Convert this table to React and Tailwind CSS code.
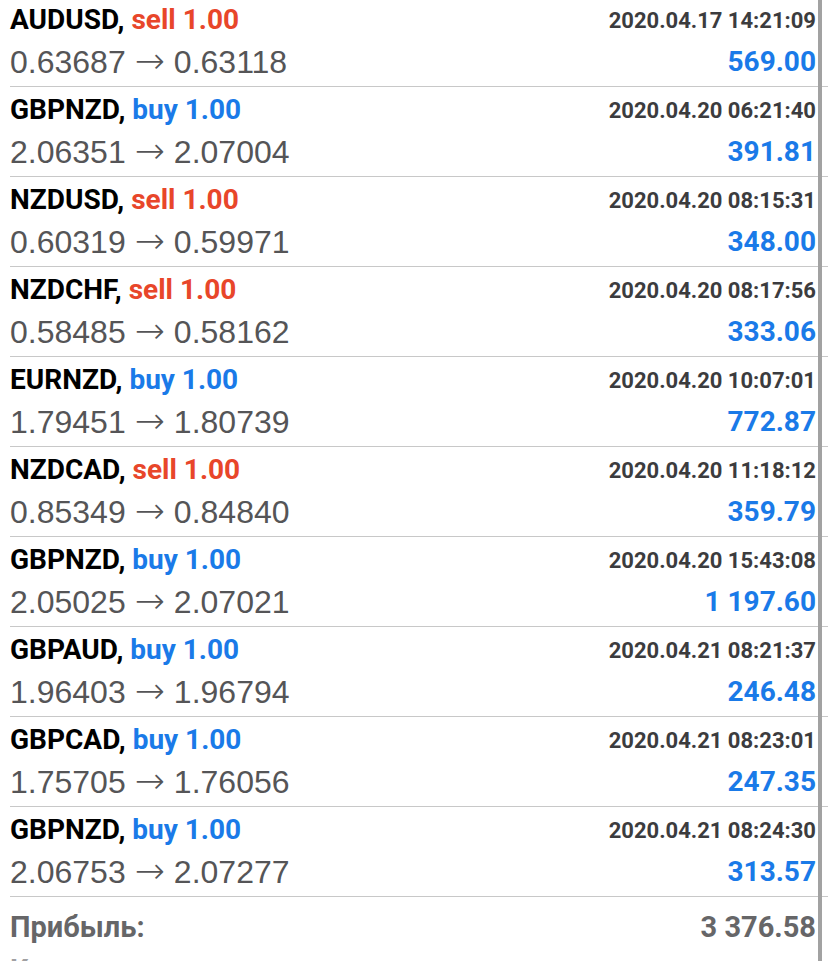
const deals = [
  { sym: "AUDUSD", type: "sell", open: "0.63687", close: "0.63118", time: "2020.04.17 14:21:09", profit: "569.00" },
  { sym: "GBPNZD", type: "buy", open: "2.06351", close: "2.07004", time: "2020.04.20 06:21:40", profit: "391.81" },
  { sym: "NZDUSD", type: "sell", open: "0.60319", close: "0.59971", time: "2020.04.20 08:15:31", profit: "348.00" },
  { sym: "NZDCHF", type: "sell", open: "0.58485", close: "0.58162", time: "2020.04.20 08:17:56", profit: "333.06" },
  { sym: "EURNZD", type: "buy", open: "1.79451", close: "1.80739", time: "2020.04.20 10:07:01", profit: "772.87" },
  { sym: "NZDCAD", type: "sell", open: "0.85349", close: "0.84840", time: "2020.04.20 11:18:12", profit: "359.79" },
  { sym: "GBPNZD", type: "buy", open: "2.05025", close: "2.07021", time: "2020.04.20 15:43:08", profit: "1 197.60" },
  { sym: "GBPAUD", type: "buy", open: "1.96403", close: "1.96794", time: "2020.04.21 08:21:37", profit: "246.48" },
  { sym: "GBPCAD", type: "buy", open: "1.75705", close: "1.76056", time: "2020.04.21 08:23:01", profit: "247.35" },
  { sym: "GBPNZD", type: "buy", open: "2.06753", close: "2.07277", time: "2020.04.21 08:24:30", profit: "313.57" },
];

const bold = "font-['Roboto','Liberation_Sans',Arial,sans-serif] font-bold";
const sans = "font-['Liberation_Sans',Arial,sans-serif]";

const DealRow = ({ deal }) => (
  <div className="ml-[10px] pr-[12px] pt-[3px] pb-[2px] border-b border-[#c8c8c8]">
    {/* symbol, type, volume + time */}
    <div className="flex justify-between items-center h-[40px]">
      <div className={`${bold} text-[28px] leading-[40px] text-black`}>
        {deal.sym},{" "}
        <span className={deal.type === "sell" ? "text-[#e8462a]" : "text-[#1a7ae8]"}>
          {deal.type} 1.00
        </span>
      </div>
      <div className={`${bold} text-[22px] text-[#3c3c3e]`}>{deal.time}</div>
    </div>
    {/* prices + profit */}
    <div className="flex justify-between items-center h-[44px]">
      <div className={`${sans} text-[32px] leading-[44px] text-[#555557] flex items-center`}>
        <span>{deal.open}</span>
        <span className="font-['DejaVu_Sans',sans-serif] font-extralight text-[36px] leading-[44px] mx-[9px] -mt-[3px]">→</span>
        <span>{deal.close}</span>
      </div>
      <div className={`${bold} text-[28px] text-[#1a7ae8]`}>{deal.profit}</div>
    </div>
  </div>
);

export default function App() {
  return (
    <div className="relative w-[828px] h-[961px] overflow-hidden bg-white">
      <div className="-mt-[3px]">
        {deals.map((d, i) => (
          <DealRow key={i} deal={d} />
        ))}

        {/* totals */}
        <div className="ml-[10px] pr-[12px] flex justify-between items-center h-[59px] pt-[3px]">
          <div className={`${bold} text-[29px] text-[#666668]`}>Прибыль:</div>
          <div className={`${bold} text-[29px] text-[#666668]`}>3 376.58</div>
        </div>
        <div className="ml-[10px] pr-[12px] flex items-start h-[40px]">
          <div className={`${bold} text-[29px] leading-none text-[#a0a0a2]`}>Кредит:</div>
        </div>
      </div>

      {/* scroll indicator */}
      <div className="absolute top-0 bottom-0 right-[6px] w-[4px] bg-[#a2a2a2]" />
    </div>
  );
}
